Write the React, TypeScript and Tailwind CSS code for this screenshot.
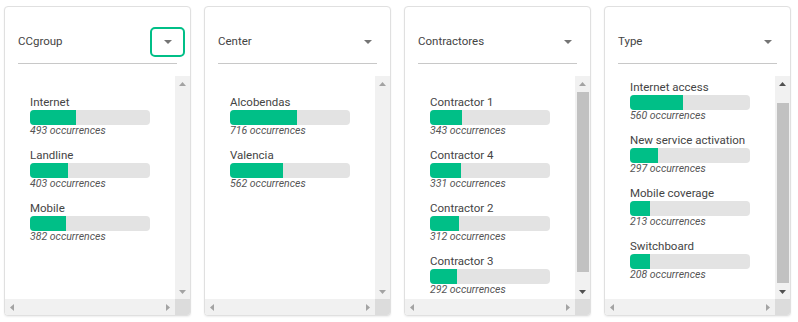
import React from "react";

type Item = { label: string; count: number };

type Panel = {
  title: string;
  items: Item[];
  focused?: boolean;
  thumb?: { top: number; height: number };
  offset?: number;
  upActive?: boolean;
  downActive?: boolean;
};

const panels: Panel[] = [
  {
    title: "CCgroup",
    focused: true,
    items: [
      { label: "Internet", count: 493 },
      { label: "Landline", count: 403 },
      { label: "Mobile", count: 382 },
    ],
  },
  {
    title: "Center",
    items: [
      { label: "Alcobendas", count: 716 },
      { label: "Valencia", count: 562 },
    ],
  },
  {
    title: "Contractores",
    thumb: { top: 1, height: 180 },
    downActive: true,
    items: [
      { label: "Contractor 1", count: 343 },
      { label: "Contractor 4", count: 331 },
      { label: "Contractor 2", count: 312 },
      { label: "Contractor 3", count: 292 },
    ],
  },
  {
    title: "Type",
    thumb: { top: 12, height: 180 },
    offset: 15,
    upActive: true,
    downActive: true,
    items: [
      { label: "Internet access", count: 560 },
      { label: "New service activation", count: 297 },
      { label: "Mobile coverage", count: 213 },
      { label: "Switchboard", count: 208 },
    ],
  },
];

function Caret({ dir, active }: { dir: "up" | "down" | "left" | "right"; active?: boolean }) {
  const color = active ? "#505050" : "#a3a3a3";
  const pts = {
    up: "0,4 7,4 3.5,0",
    down: "0,0 7,0 3.5,4",
    left: "4,0 4,7 0,3.5",
    right: "0,0 0,7 4,3.5",
  }[dir];
  const vertical = dir === "up" || dir === "down";
  return (
    <svg width={vertical ? 7 : 4} height={vertical ? 4 : 7} viewBox={vertical ? "0 0 7 4" : "0 0 4 7"}>
      <polygon points={pts} fill={color} />
    </svg>
  );
}

function Row({ item }: { item: Item }) {
  const fill = Math.round((item.count * 120) / 1280);
  return (
    <div className="pb-[13px]">
      <div className="h-[15px] leading-[15px] text-[11.5px] text-[#444]">{item.label}</div>
      <div className="w-[120px] h-[15px] rounded-[4px] bg-[#e3e3e3] overflow-hidden">
        <div className="h-full bg-[#00bf87]" style={{ width: fill }} />
      </div>
      <div className="h-[10px] leading-[11px] text-[10.5px] italic text-[#555]">{item.count} occurrences</div>
    </div>
  );
}

function Card({ panel }: { panel: Panel }) {
  return (
    <div className="w-[187px] h-[310px] flex flex-col border border-[#e0e0e0] rounded-[4px] bg-white shadow-[0_1px_2px_rgba(0,0,0,0.07)] overflow-hidden">
      {/* Header */}
      <div className="px-[13px] pt-[20px]">
        <div className="h-[30px] flex items-center justify-between">
          <span className="text-[11.5px] text-[#444]">{panel.title}</span>
          <div
            className={
              "w-[35px] h-[30px] -mr-[8px] flex items-center justify-center rounded-[5px] border-2 " +
              (panel.focused ? "border-[#00bf87]" : "border-transparent")
            }
          >
            <svg width="8" height="4" viewBox="0 0 8 4">
              <polygon points="0,0 8,0 4,4" fill="#757575" />
            </svg>
          </div>
        </div>
        <div className="mt-[6px] border-b border-[#c8c8c8]" />
      </div>

      {/* List with scrollbars */}
      <div className="mt-[12px] flex-1 flex min-h-0">
        <div className="flex-1 overflow-hidden pl-[25px]">
          <div className="pt-[19px]" style={{ marginTop: -(panel.offset ?? 0) }}>
            {panel.items.map((it) => (
              <Row key={it.label} item={it} />
            ))}
          </div>
        </div>
        <div className="w-[15px] bg-[#f1f1f1] flex flex-col">
          <div className="h-[15px] flex items-center justify-center">
            <Caret dir="up" active={panel.upActive} />
          </div>
          <div className="flex-1 px-[2px] pr-[1px]">
            {panel.thumb && (
              <div
                className="bg-[#c1c1c1] w-full"
                style={{ marginTop: panel.thumb.top, height: panel.thumb.height }}
              />
            )}
          </div>
          <div className="h-[15px] flex items-center justify-center">
            <Caret dir="down" active={panel.downActive} />
          </div>
        </div>
      </div>
      <div className="h-[16px] flex">
        <div className="flex-1 bg-[#f1f1f1] flex items-center justify-between px-[5px]">
          <Caret dir="left" />
          <Caret dir="right" />
        </div>
        <div className="w-[15px] bg-[#dcdcdc]" />
      </div>
    </div>
  );
}

export default function App() {
  return (
    <div
      className="w-[798px] h-[322px] bg-white flex gap-[13px] pl-[4px] pt-[6px]"
      style={{ fontFamily: "Roboto, 'Liberation Sans', sans-serif" }}
    >
      {panels.map((p) => (
        <Card key={p.title} panel={p} />
      ))}
    </div>
  );
}
